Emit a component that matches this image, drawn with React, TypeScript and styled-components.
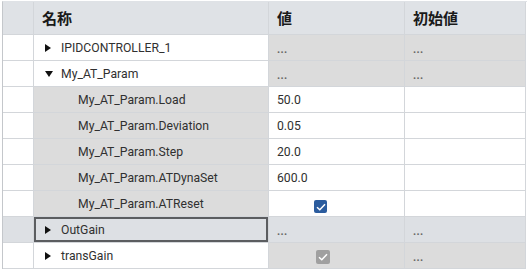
import styled, { createGlobalStyle } from 'styled-components'

const GlobalStyle = createGlobalStyle`
  body {
    margin: 0;
    background: #ffffff;
    font-family: Roboto, "Noto Sans", "Noto Sans CJK JP", sans-serif;
  }
`

type Tone = 'white' | 'grey' | 'selected' | 'head'

const toneBg: Record<Tone, string> = {
  white: '#ffffff',
  grey: '#dcdcdc',
  selected: '#dde0e4',
  head: '#dfe2e6',
}

const Grid = styled.div`
  margin: 1px 0 0 2px;
  width: 524px;
  border-left: 1px solid #c4c7cb;
  border-top: 1px solid #dfe2e6;
`

const Row = styled.div<{ $head?: boolean }>`
  display: grid;
  grid-template-columns: 31px 235px 136px 121px;
  height: ${(p) => (p.$head ? '33px' : '26px')};
`

const Cell = styled.div<{ $tone: Tone; $focus?: boolean; $indent?: number }>`
  box-sizing: border-box;
  display: flex;
  align-items: center;
  gap: 8px;
  padding-left: ${(p) => p.$indent ?? 8}px;
  background: ${(p) => toneBg[p.$tone]};
  border-right: 1px solid #d3d6da;
  border-bottom: 1px solid #d3d6da;
  box-shadow: ${(p) => (p.$focus ? 'inset 0 0 0 2px #5b5d60' : 'none')};
  font-size: 12.2px;
  color: #303030;
  white-space: nowrap;
  overflow: hidden;
`

const HeadText = styled.span`
  font-family: "Noto Sans CJK JP", "Noto Sans", sans-serif;
  font-weight: 700;
  font-size: 15px;
  color: #1a1a1a;
  margin-top: -2px;
`

const Arrow = styled.span<{ $open?: boolean }>`
  width: 0;
  height: 0;
  border-style: solid;
  border-color: transparent;
  ${(p) =>
    p.$open
      ? `border-width: 6px 4px 0 4px; border-top-color: #111;`
      : `border-width: 4px 0 4px 6px; border-left-color: #111; margin-right: 2px;`}
`

const Dots = styled.span`
  font-size: 11px;
  font-weight: 700;
  color: #666;
  letter-spacing: 0.3px;
  margin-top: 3px;
`

const Check = styled.span<{ $disabled?: boolean }>`
  box-sizing: border-box;
  width: ${(p) => (p.$disabled ? 14 : 13)}px;
  height: ${(p) => (p.$disabled ? 14 : 13)}px;
  margin-left: ${(p) => (p.$disabled ? 39 : 37)}px;
  margin-top: ${(p) => (p.$disabled ? 3 : 6)}px;
  border-radius: 2px;
  background: ${(p) => (p.$disabled ? '#a0a0a0' : '#2b5c9e')};
  display: flex;
  align-items: center;
  justify-content: center;
`

const Tick = () => (
  <svg width="10" height="8" viewBox="0 0 10 8">
    <path d="M1 4.2 L3.8 6.8 L9 1.2" fill="none" stroke="#fff" strokeWidth="1.5" />
  </svg>
)

type Item = {
  name: string
  arrow?: 'open' | 'closed'
  child?: boolean
  value?: string
  dots?: boolean
  check?: 'on' | 'disabled'
  initDots?: boolean
  selected?: boolean
}

const items: Item[] = [
  { name: 'IPIDCONTROLLER_1', arrow: 'closed', dots: true, initDots: true },
  { name: 'My_AT_Param', arrow: 'open', dots: true, initDots: true },
  { name: 'My_AT_Param.Load', child: true, value: '50.0' },
  { name: 'My_AT_Param.Deviation', child: true, value: '0.05' },
  { name: 'My_AT_Param.Step', child: true, value: '20.0' },
  { name: 'My_AT_Param.ATDynaSet', child: true, value: '600.0' },
  { name: 'My_AT_Param.ATReset', child: true, check: 'on' },
  { name: 'OutGain', arrow: 'closed', dots: true, initDots: true, selected: true },
  { name: 'transGain', arrow: 'closed', check: 'disabled', initDots: true },
]

const App = () => {
  return (
    <>
      <GlobalStyle />
      <Grid>
        <Row $head>
          <Cell $tone="head" />
          <Cell $tone="head">
            <HeadText>名称</HeadText>
          </Cell>
          <Cell $tone="head">
            <HeadText>値</HeadText>
          </Cell>
          <Cell $tone="head">
            <HeadText>初始値</HeadText>
          </Cell>
        </Row>
        {items.map((it) => {
          const rowTone: Tone = it.selected ? 'selected' : 'white'
          const nameTone: Tone = it.selected ? 'selected' : it.child ? 'grey' : 'white'
          const valueTone: Tone = it.selected ? 'selected' : it.dots || it.check === 'disabled' ? 'grey' : 'white'
          const initTone: Tone = it.selected ? 'selected' : it.initDots ? 'grey' : 'white'
          return (
            <Row key={it.name}>
              <Cell $tone={rowTone} />
              <Cell $tone={nameTone} $focus={it.selected} $indent={it.child ? 44 : 11}>
                {it.arrow && <Arrow $open={it.arrow === 'open'} />}
                <span>{it.name}</span>
              </Cell>
              <Cell $tone={valueTone}>
                {it.value}
                {it.dots && <Dots>...</Dots>}
                {it.check && (
                  <Check $disabled={it.check === 'disabled'}>
                    <Tick />
                  </Check>
                )}
              </Cell>
              <Cell $tone={initTone}>{it.initDots && <Dots>...</Dots>}</Cell>
            </Row>
          )
        })}
      </Grid>
    </>
  )
}

export default App
